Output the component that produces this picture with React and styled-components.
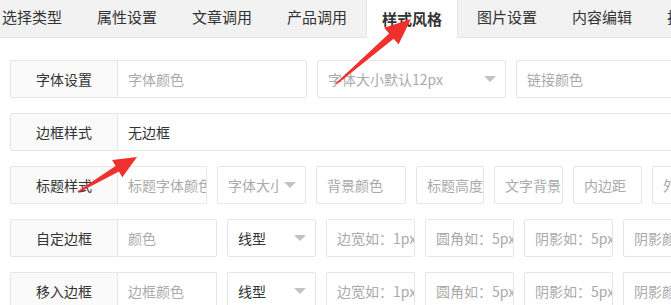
import styled, { createGlobalStyle } from "styled-components";

const GlobalStyle = createGlobalStyle`
  html, body {
    margin: 0;
    padding: 0;
    background: #fff;
    overflow: hidden;
  }
  body {
    font-family: "Noto Sans CJK SC", "Noto Sans", sans-serif;
    color: #333;
  }
`;

const tabs = ["选择类型", "属性设置", "文章调用", "产品调用", "样式风格", "图片设置", "内容编辑", "排版设置"];

const rows = [
    {
        label: "字体设置",
        input: { w: 189, ph: "字体颜色" },
        rest: [
            { type: "select", w: 189, ph: "字体大小默认12px" },
            { type: "input", w: 200, ph: "链接颜色" },
        ],
    },
    {
        label: "边框样式",
        input: { w: 700, value: "无边框" },
        rest: [],
    },
    {
        label: "标题样式",
        input: { w: 89, ph: "标题字体颜色" },
        rest: [
            { type: "select", w: 89, ph: "字体大小" },
            { type: "input", w: 90, ph: "背景颜色" },
            { type: "input", w: 68, ph: "标题高度" },
            { type: "input", w: 69, ph: "文字背景" },
            { type: "input", w: 69, ph: "内边距" },
            { type: "input", w: 69, ph: "外边距" },
        ],
    },
    {
        label: "自定边框",
        input: { w: 99, ph: "颜色" },
        rest: [
            { type: "select", w: 89, value: "线型" },
            { type: "input", w: 89, ph: "边宽如：1px" },
            { type: "input", w: 89, ph: "圆角如：5px" },
            { type: "input", w: 89, ph: "阴影如：5px" },
            { type: "input", w: 89, ph: "阴影颜色" },
        ],
    },
    {
        label: "移入边框",
        input: { w: 99, ph: "边框颜色" },
        rest: [
            { type: "select", w: 89, value: "线型" },
            { type: "input", w: 89, ph: "边宽如：1px" },
            { type: "input", w: 89, ph: "圆角如：5px" },
            { type: "input", w: 89, ph: "阴影如：5px" },
            { type: "input", w: 89, ph: "阴影颜色" },
        ],
    },
];

// polygon for a tapered annotation arrow
function arrowPoints(x1, y1, x2, y2, head, wing, w0, w1) {
    const dx = x2 - x1;
    const dy = y2 - y1;
    const len = Math.hypot(dx, dy);
    const ux = dx / len;
    const uy = dy / len;
    const nx = -uy;
    const ny = ux;
    const bx = x2 - ux * head;
    const by = y2 - uy * head;
    const p = (x, y, k) => `${(x + nx * k).toFixed(1)},${(y + ny * k).toFixed(1)}`;
    return [
        p(x1, y1, w0),
        p(bx, by, w1),
        p(bx, by, wing),
        `${x2},${y2}`,
        p(bx, by, -wing),
        p(bx, by, -w1),
        p(x1, y1, -w0),
    ].join(" ");
}

function Select({ w, ph, value }) {
    return (
        <SelectBox $w={w}>
            <Field $w={w} $select readOnly placeholder={ph} defaultValue={value} />
            <Caret />
        </SelectBox>
    );
}

export default function App() {
    return (
        <Page>
            <GlobalStyle />
            <TabBar>
                <TabList>
                    {tabs.map((t) => (
                        <Tab key={t} $active={t === "样式风格"}>{t}</Tab>
                    ))}
                </TabList>
            </TabBar>

            <Form>
                {rows.map((row) => (
                    <Row key={row.label}>
                        <Group>
                            <Label>{row.label}</Label>
                            <Field
                                $w={row.input.w}
                                $joined
                                readOnly
                                placeholder={row.input.ph}
                                defaultValue={row.input.value}
                            />
                        </Group>
                        {row.rest.map((item, i) =>
                            item.type === "select" ? (
                                <Select key={i} {...item} />
                            ) : (
                                <Field key={i} $w={item.w} readOnly placeholder={item.ph} />
                            )
                        )}
                    </Row>
                ))}
            </Form>

            <Overlay viewBox="0 0 671 305">
                <polygon points={arrowPoints(336, 84, 411, 19, 26, 11, 0.8, 3.5)} fill="#f0302c" />
                <polygon points={arrowPoints(78, 192, 137, 157, 23, 10, 0.8, 3.2)} fill="#f0302c" />
            </Overlay>
        </Page>
    );
}

const Page = styled.div`
    position: relative;
    width: 671px;
    height: 305px;
    overflow: hidden;
    background: #fff;
`

const TabBar = styled.div`
    height: 38px;
    box-sizing: border-box;
    background: #f2f2f2;
    border-bottom: 1px solid #e6e6e6;
`

const TabList = styled.ul`
    display: flex;
    gap: 5px;
    margin: 0 0 0 -13px;
    padding: 0;
    list-style: none;
    white-space: nowrap;
`

const Tab = styled.li`
    flex-shrink: 0;
    padding: 0 15px;
    font-size: 15px;
    color: #333;
    height: ${(p) => (p.$active ? "38px" : "37px")};
    line-height: ${(p) => (p.$active ? "37px" : "33px")};
    font-weight: ${(p) => (p.$active ? 700 : 400)};
    background: ${(p) => (p.$active ? "#fff" : "transparent")};
    border-left: ${(p) => (p.$active ? "1px solid #e6e6e6" : "none")};
    border-right: ${(p) => (p.$active ? "1px solid #e6e6e6" : "none")};
    margin: ${(p) => (p.$active ? "0 -1px" : "0")};
    box-sizing: border-box;
`

const Form = styled.div`
    display: flex;
    flex-direction: column;
    gap: 15px;
    padding: 22px 0 0 10px;
    width: 1000px;
`

const Row = styled.div`
    display: flex;
    gap: 10px;
    height: 38px;
`

const Group = styled.div`
    display: flex;
    flex-shrink: 0;
`

const Label = styled.div`
    width: 108px;
    height: 38px;
    box-sizing: border-box;
    border: 1px solid #e6e6e6;
    border-radius: 2px 0 0 2px;
    background: #fafafa;
    text-align: center;
    line-height: 36px;
    font-size: 14px;
    color: #333;
`

const Field = styled.input`
    width: ${(p) => p.$w}px;
    height: 38px;
    flex-shrink: 0;
    box-sizing: border-box;
    margin: 0;
    padding: 0 ${(p) => (p.$select ? "26px" : "0")} 0 10px;
    border: 1px solid #e6e6e6;
    border-left: ${(p) => (p.$joined ? "none" : "1px solid #e6e6e6")};
    border-radius: ${(p) => (p.$joined ? "0 2px 2px 0" : "2px")};
    background: #fff;
    font-family: "Noto Sans CJK SC", "Noto Sans", sans-serif;
    font-size: 14px;
    color: #333;
    outline: none;

    &::placeholder {
        color: #aaa;
    }
`

const SelectBox = styled.div`
    position: relative;
    width: ${(p) => p.$w}px;
    flex-shrink: 0;
`

const Caret = styled.span`
    position: absolute;
    right: 10px;
    top: 50%;
    margin-top: -3px;
    width: 0;
    height: 0;
    border-style: solid;
    border-width: 6px 6px 0 6px;
    border-color: #c2c2c2 transparent transparent transparent;
`

const Overlay = styled.svg`
    position: absolute;
    left: 0;
    top: 0;
    width: 671px;
    height: 305px;
    pointer-events: none;
`
